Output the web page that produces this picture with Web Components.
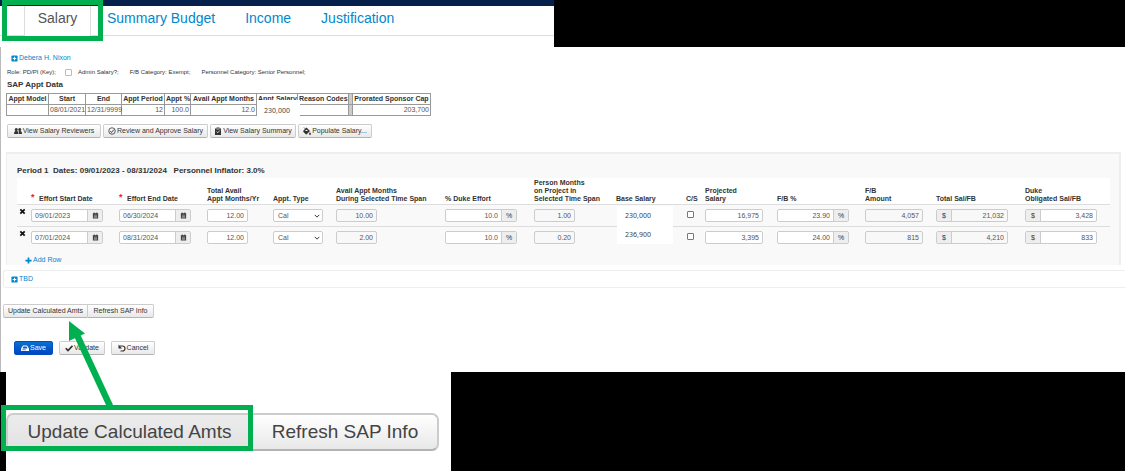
<!DOCTYPE html>
<html lang="en">
<head>
<meta charset="utf-8">
<title>Salary</title>
<style>
  body { margin: 0; background: #fff; color: #333; font: 7px/10px "Liberation Sans", Arial, sans-serif; }
</style>
</head>
<body>
<salary-page></salary-page>

<script>
const ICONS = {
  plusbox: '<rect x="1" y="1" width="14" height="14" rx="2"/><path d="M8 4v8M4 8h8" stroke="#fff" stroke-width="2.6"/>',
  plus: '<path d="M8 1v14M1 8h14" stroke="currentColor" stroke-width="4"/>',
  users: '<circle cx="4.500" cy="5" r="3"/><path d="M0 14c0-5 2-6 4.500-6S9 9 9 14z"/><circle cx="11.500" cy="5" r="3"/><path d="M10 14c0-3 0-4-1-5 4-2 7-1 7 5z"/>',
  checkcircle: '<circle cx="8" cy="8" r="6.500" fill="none" stroke="currentColor" stroke-width="1.600"/><path d="M4.500 8l2.500 3 5-6" fill="none" stroke="currentColor" stroke-width="1.800"/>',
  clipboard: '<path d="M2 3h3V1h6v2h3v13H2z"/><path d="M5 9l2.500 2.500L11.500 7M5 4h6" fill="none" stroke="#fff" stroke-width="1.500"/>',
  fill: '<path d="M1 7l6-6 7 7-6 6c-1 1-2 1-3 0L1 10c-1-1-1-2 0-3z"/><path d="M4 8l3-3 3 3z" fill="#fff"/><path d="M2 1l5 5" stroke="currentColor" stroke-width="1.500"/><path d="M14 10c3 4 2 6 0 6s-3-2 0-6z"/>',
  calendar: '<path d="M2 3h2V1h2v2h4V1h2v2h2v12H2z"/><path d="M4 7h8M4 10h8M4 13h8" stroke="#eee" stroke-width="1.200"/>',
  remove: '<path d="M3 3l10 10M13 3L3 13" stroke="currentColor" stroke-width="4"/>',
  drive: '<path d="M4 3h8l4 6v5H0V9z"/><path d="M5 5h6l2 4H3z" fill="#0a58ca"/><path d="M2.500 11.500h7" stroke="#0a58ca" stroke-width="1.400"/>',
  check: '<path d="M1.500 8.500l4.500 4.500L15 3.500" fill="none" stroke="currentColor" stroke-width="3.500"/>',
  undo: '<path d="M3 4h6a4.500 4.500 0 0 1 0 10H5" fill="none" stroke="currentColor" stroke-width="2.400"/><path d="M1 1v8h7z"/>',
  chevron: '<path d="M2 5l6 6 6-6" fill="none" stroke="currentColor" stroke-width="2.600"/>'
};
const svg = name => `<svg viewBox="0 0 16 16" fill="currentColor" aria-hidden="true">${ICONS[name]}</svg>`;

function define(name, render) {
  customElements.define(name, class extends HTMLElement {
    connectedCallback() {
      if (this.shadowRoot) return;
      const t = document.createElement('template');
      t.innerHTML = render(this);
      this.attachShadow({ mode: 'open' }).append(t.content.cloneNode(true));
    }
  });
}

/* Icon drawn at --size */
define('ui-icon', el => `
<style>
  :host { display: block; width: var(--size, 7px); height: var(--size, 7px); }
  svg { display: block; width: 100%; height: 100%; }
</style>${svg(el.getAttribute('name'))}`);

/* Push button; kind = primary, group-start, group-end; size = large */
define('ui-button', el => `
<style>
  :host { display: block; }
  button {
    display: flex; align-items: center; justify-content: center; gap: 1px; box-sizing: border-box;
    width: 100%; height: 100%; padding: 0; margin: 0; white-space: nowrap;
    font: inherit; color: #333; background: linear-gradient(#fff, #e8e8e8);
    border: 1px solid #ccc; border-bottom-color: #b3b3b3; border-radius: 2px;
  }
  ui-icon { --size: 8px; }
  :host([kind=primary]) button { color: #fff; background: linear-gradient(#0a6fd0, #0044c4); border-color: #0050c0; }
  :host([kind=group-start]) button { border-radius: 2px 0 0 2px; }
  :host([kind=group-end]) button { border-radius: 0 2px 2px 0; border-left: 0; }
  :host([size=large]) button { border-width: 2px; border-radius: 7px 0 0 7px; background: linear-gradient(#ececec, #e2e2e2); color: #444; }
  :host([size=large][kind=group-end]) button { border-radius: 0 7px 7px 0; background: linear-gradient(#fff, #e8e8e8); }
</style>
<button type="button">${el.hasAttribute('icon') ? `<ui-icon name="${el.getAttribute('icon')}"></ui-icon>` : ''}<slot></slot></button>`);

/* Text box with an optional text or calendar add-on before or after it */
define('ui-field', el => {
  const pre = el.getAttribute('prefix'), suf = el.getAttribute('suffix'), cal = el.hasAttribute('calendar');
  return `
<style>
  :host { display: block; }
  .box { display: flex; box-sizing: border-box; height: 13px; border: 1px solid #ccc; border-radius: 2px; background: #fff; overflow: hidden; }
  input {
    flex: 1; min-width: 0; width: 0; padding: 0 3px; margin: 0; border: 0; outline: 0; background: transparent;
    font: inherit; color: #555; text-align: right;
  }
  :host([calendar]) input { text-align: left; }
  :host([readonly]) .box { background: #f8f8f8; }
  .add { flex: none; display: flex; align-items: center; justify-content: center; width: 14px; background: #eee; color: #333; }
  .pre { border-right: 1px solid #ccc; }
  .suf { border-left: 1px solid #ccc; }
</style>
<div class="box">
  ${pre ? `<span class="add pre">${pre}</span>` : ''}
  <input type="text" value="${el.getAttribute('value')}" aria-label="${el.getAttribute('label')}" ${el.hasAttribute('readonly') ? 'readonly' : ''}>
  ${suf ? `<span class="add suf">${suf}</span>` : ''}
  ${cal ? '<span class="add suf"><ui-icon name="calendar"></ui-icon></span>' : ''}
</div>`;
});

define('ui-select', el => `
<style>
  :host { display: block; position: relative; }
  select { appearance: none; display: block; box-sizing: border-box; width: 100%; height: 13px; padding: 0 4px; margin: 0; border: 1px solid #ccc; border-radius: 2px; background: #fff; color: #555; font: inherit; }
  ui-icon { --size: 6px; position: absolute; right: 3px; top: 4px; pointer-events: none; color: #333; }
</style>
<select aria-label="${el.getAttribute('label')}"><option>${el.getAttribute('value')}</option></select>
<ui-icon name="chevron"></ui-icon>`);

define('icon-link', el => `
<style>
  :host { display: block; }
  a { display: flex; width: max-content; align-items: center; gap: 1px; color: #0088cc; text-decoration: none; }
</style>
<a href="#"><ui-icon name="${el.getAttribute('icon')}"></ui-icon><slot></slot></a>`);

define('tab-nav', () => `
<style>
  :host { display: block; box-sizing: border-box; border-top: 6px solid #05204a; background: #fff; position: relative; }
  nav { display: flex; height: 30px; box-sizing: border-box; padding-left: 24px; border-bottom: 1px solid #ddd; font-size: 14px; line-height: 24px; }
  a { color: #0088cc; text-decoration: none; white-space: nowrap; margin-right: 30px; }
  a.on { box-sizing: border-box; width: 67px; height: 30px; margin-right: 16px; text-align: center; color: #555; background: #fff; border: solid #ddd; border-width: 0 1px; }
  .mark { position: absolute; left: 2px; top: -6px; box-sizing: border-box; width: 101px; height: 47px; border: 5px solid #00b050; height: 41px; }
</style>
<nav><a class="on" href="#">Salary</a><a href="#">Summary Budget</a><a href="#">Income</a><a href="#">Justification</a></nav>
<div class="mark"></div>`);

define('appt-table', () => `
<style>
  :host { display: block; }
  table { border-collapse: collapse; table-layout: fixed; width: 424px; }
  th, td { box-sizing: border-box; height: 11px; padding: 0 1px; border: 1px solid #999; line-height: 10px; white-space: nowrap; text-align: right; }
  th { text-align: center; color: #333; }
  td { color: #555; }
  .sep { background: #ccc; }
  .cover { position: relative; padding: 0; }
  .cover span { position: absolute; left: 0; top: -5px; width: 43px; height: 18px; background: #fff; color: #444; box-sizing: border-box; padding: 5px 7px 0; font: 7px/12px "Noto Sans", sans-serif; text-align: left; }
</style>
<table>
  <colgroup><col style="width:42px"><col style="width:37px"><col style="width:36px"><col style="width:43px"><col style="width:26px"><col style="width:66px"><col style="width:41px"><col style="width:51px"><col style="width:4px"><col style="width:78px"></colgroup>
  <tr><th>Appt Model</th><th>Start</th><th>End</th><th>Appt Period</th><th>Appt %</th><th>Avail Appt Months</th><th>Appt Salary</th><th>Reason Codes</th><th class="sep"></th><th>Prorated Sponsor Cap</th></tr>
  <tr><td></td><td>08/01/2021</td><td>12/31/9999</td><td>12</td><td>100.0</td><td>12.0</td><td class="cover"><span>230,000</span></td><td></td><td class="sep"></td><td>203,700</td></tr>
</table>`);

const COLS = [
  ['', 14], ['Effort Start Date', 88, 1], ['Effort End Date', 88, 1], ['Total Avail<br>Appt Months/Yr', 66], ['Appt. Type', 63],
  ['Avail Appt Months<br>During Selected Time Span', 109], ['% Duke Effort', 89], ['Person Months<br>on Project in<br>Selected Time Span', 82],
  ['Base Salary', 70], ['C/S', 19], ['Projected<br>Salary', 72], ['F/B %', 88], ['F/B<br>Amount', 71], ['Total Sal/FB', 89], ['Duke<br>Obligated Sal/FB', 85]
];
const ROWS = [
  ['09/01/2023', '06/30/2024', '12.00', 'Cal', '10.00', '10.0', '1.00', '16,975', '23.90', '4,057', '21,032', '3,428'],
  ['07/01/2024', '08/31/2024', '12.00', 'Cal', '2.00', '10.0', '0.20', '3,395', '24.00', '815', '4,210', '833']
];
const f = (w, label, value, extra = '') => `<td><ui-field class="${w}" label="${label}" value="${value}" ${extra}></ui-field></td>`;
const effortRow = (r, i) => `<tr>
  <td class="x"><button type="button" aria-label="Remove row"><ui-icon name="remove"></ui-icon></button></td>
  ${f('l', 'Effort Start Date', r[0], 'calendar')}${f('l', 'Effort End Date', r[1], 'calendar')}
  ${f('s', 'Total Avail Appt Months/Yr', r[2])}
  <td><ui-select label="Appt. Type" value="${r[3]}"></ui-select></td>
  ${f('s', 'Avail Appt Months During Selected Time Span', r[4], 'readonly')}
  ${f('l', '% Duke Effort', r[5], 'suffix="%"')}
  ${f('s', 'Person Months on Project in Selected Time Span', r[6], 'readonly')}
  <td class="base">${i ? '' : '<div><span>230,000</span><span>236,900</span></div>'}</td>
  <td><input type="checkbox" aria-label="C/S"></td>
  ${f('m', 'Projected Salary', r[7])}${f('l', 'F/B %', r[8], 'suffix="%"')}${f('m', 'F/B Amount', r[9], 'readonly')}
  ${f('l', 'Total Sal/FB', r[10], 'prefix="$" readonly')}${f('l', 'Duke Obligated Sal/FB', r[11], 'prefix="$"')}
</tr>`;

define('effort-table', () => `
<style>
  :host { display: block; }
  table { width: 100%; table-layout: fixed; border-collapse: collapse; }
  th { height: 25px; padding: 0 0 1px; vertical-align: bottom; text-align: left; white-space: nowrap; line-height: 8px; background: #fff; border-bottom: 1px solid #ddd; color: #333; }
  i { display: inline-block; width: 8px; height: 10px; font: bold 9px/8px "Liberation Sans", sans-serif; color: #e8202a; vertical-align: bottom; }
  td { height: 21px; padding: 0; border-bottom: 1px solid #ddd; }
  tr:last-child td { border: 0; }
  td.x { vertical-align: top; padding-top: 3px; height: 18px; }
  .x button { display: block; padding: 0; border: 0; margin: 0 2px; background: none; color: #111; }
  .l { width: 72px; } .m { width: 58px; } .s { width: 41px; } ui-select { width: 50px; }
  .base { position: relative; }
  .base div { position: absolute; left: 1px; top: 1px; width: 56px; height: 38px; background: #fff; display: flex; flex-direction: column; justify-content: space-around; box-sizing: border-box; padding-left: 8px; font: 7px/12px "Noto Sans", sans-serif; color: #444; }
  input[type=checkbox] { appearance: none; display: block; box-sizing: border-box; width: 7px; height: 7px; margin: 0 0 2px 1px; border: 1px solid #777; border-radius: 1px; background: #fff; }
</style>
<table>
  <colgroup>${COLS.map(c => `<col style="width:${c[1]}px">`).join('')}</colgroup>
  <thead><tr>${COLS.map(c => `<th>${c[2] ? '<i>*</i>' : ''}${c[0]}</th>`).join('')}</tr></thead>
  <tbody>${ROWS.map(effortRow).join('')}</tbody>
</table>`);

define('period-panel', () => `
<style>
  :host { display: block; box-sizing: border-box; height: 113px; padding: 12px 10px 0; background: #f9f9f9; border: 1px solid #eee; border-width: 2px 2px 0 1px; }
  h3 { margin: 0 0 2px; font-size: 8px; line-height: 10px; white-space: pre; }
  icon-link { padding: 7px 0 0 8px; }
</style>
<h3>Period 1  Dates: 09/01/2023 - 08/31/2024   Personnel Inflator: 3.0%</h3>
<effort-table></effort-table>
<icon-link icon="plus">Add Row</icon-link>`);

define('person-section', () => `
<style>
  :host { display: block; padding-left: 5px; }
  .who { padding-left: 5px; margin-bottom: 4px; }
  .meta { display: flex; align-items: center; gap: 11px; font-size: 6px; line-height: 10px; white-space: nowrap; padding-left: 1px; }
  label { display: flex; align-items: center; gap: 6px; margin-left: -2px; }
  input { appearance: none; box-sizing: border-box; width: 7px; height: 7px; margin: 0; border: 1px solid #bbb; border-radius: 1px; }
  h2 { margin: 3px 0 3px 1px; font-size: 8px; line-height: 10px; }
  .actions { display: flex; gap: 2px; height: 14px; margin: 8px 0 14px 1px; }
</style>
<icon-link class="who" icon="plusbox">Debera H. Nixon</icon-link>
<div class="meta"><span>Role: PD/PI (Key);</span><label><input type="checkbox">Admin Salary?;</label><span>F/B Category: Exempt;</span><span>Personnel Category: Senior Personnel;</span></div>
<h2>SAP Appt Data</h2>
<appt-table></appt-table>
<div class="actions">
  <ui-button icon="users" style="width:94px">View Salary Reviewers</ui-button>
  <ui-button icon="checkcircle" style="width:105px">Review and Approve Salary</ui-button>
  <ui-button icon="clipboard" style="width:86px">View Salary Summary</ui-button>
  <ui-button icon="fill" style="width:74px">Populate Salary...</ui-button>
</div>
<period-panel></period-panel>`);

define('salary-page', () => `
<style>
  :host { display: block; position: relative; }
  .top { display: grid; grid-template-columns: 554fr 571fr; height: 47px; }
  .black { background: #000; }
  main { display: block; height: 325px; box-sizing: border-box; border-left: 1px solid #bbb; padding-top: 6px; }
  person-section { margin-right: 4px; }
  .tbd { box-sizing: border-box; height: 18px; margin: 5px 0 0 2px; padding: 3px 7px; border: 1px solid #eee; border-right: 0; border-radius: 3px 0 0 3px; }
  .group, .save { display: flex; }
  .group { height: 14px; margin: 16px 0 0 2px; }
  .save { gap: 6px; height: 14px; margin: 23px 0 0 13px; }
  .bottom { display: grid; grid-template-columns: 6px 445fr 674fr; height: 99px; }
  .zoomed { display: flex; height: 38px; margin-top: 41px; font-size: 19px; line-height: 24px; }
  .mark { position: absolute; left: 1px; top: 405px; box-sizing: border-box; width: 252px; height: 46px; border: 5px solid #00b050; }
  .arrow { position: absolute; left: 60px; top: 318px; width: 60px; height: 90px; }
</style>
<div class="top"><tab-nav></tab-nav><div class="black"></div></div>
<main>
  <person-section></person-section>
  <div class="tbd"><icon-link icon="plusbox">TBD</icon-link></div>
  <div class="group">
    <ui-button kind="group-start" style="width:85px">Update Calculated Amts</ui-button>
    <ui-button kind="group-end" style="width:66px">Refresh SAP Info</ui-button>
  </div>
  <div class="save">
    <ui-button kind="primary" icon="drive" style="width:39px">Save</ui-button>
    <ui-button icon="check" style="width:46px">Validate</ui-button>
    <ui-button icon="undo" style="width:44px">Cancel</ui-button>
  </div>
</main>
<div class="bottom">
  <div class="black"></div>
  <div class="zoomed">
    <ui-button size="large" kind="group-start" style="width:247px">Update Calculated Amts</ui-button>
    <ui-button size="large" kind="group-end" style="width:186px">Refresh SAP Info</ui-button>
  </div>
  <div class="black"></div>
</div>
<svg class="arrow" viewBox="60 318 60 90" aria-hidden="true"><path d="M77 335L110 406" stroke="#00b050" stroke-width="6.500"/><path d="M69 321L85 333.500 69 341z" fill="#00b050"/></svg>
<div class="mark"></div>`);
</script>
</body>
</html>
